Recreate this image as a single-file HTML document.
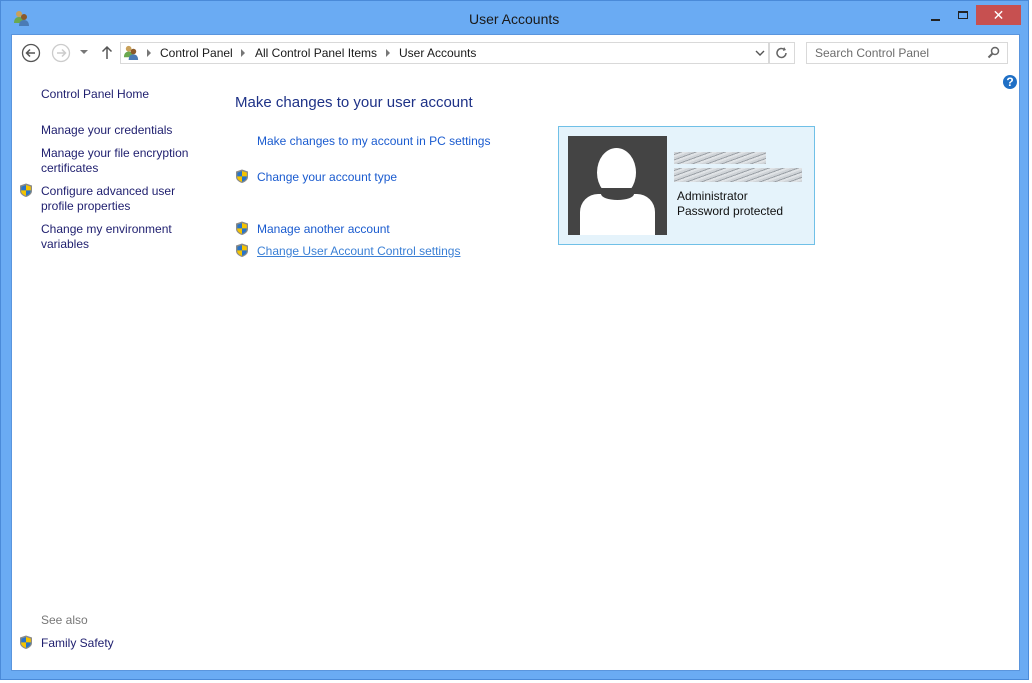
<!DOCTYPE html>
<html><head><meta charset="utf-8"><style>
*{margin:0;padding:0;box-sizing:border-box}
body{width:1032px;height:683px;background:#fff;font-family:"Liberation Sans",sans-serif;font-size:12px;position:relative;overflow:hidden}
.win{position:absolute;left:0;top:0;width:1029px;height:680px;background:#6aabf3;border:1px solid #4a8ad8}
.content{position:absolute;left:11px;top:34px;width:1009px;height:637px;background:#fff;border:1px solid #5a95dd}
.t{position:absolute;white-space:nowrap}
.nav{color:#1e1e6e;font-size:12px;line-height:15px}
.lnk{color:#1a5bcf;font-size:12px}
svg{position:absolute}
.arr{position:absolute;top:49px;width:0;height:0;border-left:4px solid #777;border-top:4px solid transparent;border-bottom:4px solid transparent}
</style></head><body>
<div class="win"></div>
<div class="t" style="left:469px;top:11px;font-size:14px;color:#1a1a1a">User Accounts</div>
<svg style="left:13px;top:9px" width="18" height="18" viewBox="0 0 18 18"><circle cx="6" cy="5" r="3" fill="#c9a15a"/><path d="M1 14c0-4 2-6 5-6s5 2 5 6z" fill="#6aa84f"/><circle cx="11" cy="8" r="3" fill="#8a5a2b"/><path d="M6 17c0-4 2-6 5-6s5 2 5 6z" fill="#4a7bb5"/></svg>
<div style="position:absolute;left:931px;top:19px;width:9px;height:2px;background:#222"></div>
<div style="position:absolute;left:958px;top:11px;width:10px;height:8px;border:1px solid #222;border-top-width:2px"></div>
<div style="position:absolute;left:976px;top:5px;width:45px;height:20px;background:#c75050;color:#fff;font-size:14px;text-align:center;line-height:20px">✕</div>
<div class="content"></div>
<svg style="left:21px;top:43px" width="20" height="20"><circle cx="10" cy="10" r="8.5" fill="none" stroke="#555" stroke-width="1.3"/><path d="M14 10H6M9 6.5L5.5 10 9 13.5" fill="none" stroke="#555" stroke-width="1.5"/></svg>
<svg style="left:51px;top:43px" width="20" height="20"><circle cx="10" cy="10" r="8.5" fill="none" stroke="#ccc" stroke-width="1.3"/><path d="M6 10h8M11 6.5L14.5 10 11 13.5" fill="none" stroke="#ccc" stroke-width="1.5"/></svg>
<svg style="left:80px;top:50px" width="8" height="5"><path d="M0 0h8L4 4z" fill="#777"/></svg>
<svg style="left:101px;top:45px" width="12" height="15"><path d="M6 14V2M1.5 6.5L6 2l4.5 4.5" fill="none" stroke="#555" stroke-width="1.5"/></svg>
<div style="position:absolute;left:120px;top:42px;width:650px;height:22px;border:1px solid #d9d9d9"></div>
<div style="position:absolute;left:768px;top:42px;width:27px;height:22px;border:1px solid #d9d9d9"></div>
<svg style="left:123px;top:44px" width="17" height="17" viewBox="0 0 18 18"><circle cx="6" cy="5" r="3" fill="#c9a15a"/><path d="M1 14c0-4 2-6 5-6s5 2 5 6z" fill="#6aa84f"/><circle cx="11" cy="8" r="3" fill="#8a5a2b"/><path d="M6 17c0-4 2-6 5-6s5 2 5 6z" fill="#4a7bb5"/></svg>
<div class="arr" style="left:147px"></div>
<div class="t" style="left:160px;top:46px;color:#1a1a1a">Control Panel</div>
<div class="arr" style="left:241px"></div>
<div class="t" style="left:255px;top:46px;color:#1a1a1a">All Control Panel Items</div>
<div class="arr" style="left:386px"></div>
<div class="t" style="left:399px;top:46px;color:#1a1a1a">User Accounts</div>
<svg style="left:755px;top:49px" width="10" height="8"><path d="M1 2l4 4 4-4" fill="none" stroke="#555" stroke-width="1.4"/></svg>
<svg style="left:775px;top:46px" width="14" height="14"><path d="M11 7a4.5 4.5 0 1 1-1.5-3.4" fill="none" stroke="#666" stroke-width="1.5"/><path d="M9 1l2 3-3 1z" fill="#666"/></svg>
<div style="position:absolute;left:806px;top:42px;width:202px;height:22px;border:1px solid #d9d9d9"></div>
<div class="t" style="left:815px;top:46px;color:#6d6d6d">Search Control Panel</div>
<svg style="left:987px;top:46px" width="13" height="13"><circle cx="8" cy="5" r="3.5" fill="none" stroke="#666" stroke-width="1.5"/><path d="M5.5 7.5L1.5 11.5" stroke="#666" stroke-width="2"/></svg>
<div style="position:absolute;left:1003px;top:75px;width:14px;height:14px;border-radius:50%;background:#1f6fc5;color:#fff;font-weight:bold;font-size:12px;text-align:center;line-height:14px">?</div>
<div class="t nav" style="left:41px;top:87px">Control Panel Home</div>
<div class="t nav" style="left:41px;top:123px">Manage your credentials</div>
<div class="t nav" style="left:41px;top:146px">Manage your file encryption<br>certificates</div>
<div class="t nav" style="left:41px;top:184px">Configure advanced user<br>profile properties</div>
<div class="t nav" style="left:41px;top:222px">Change my environment<br>variables</div>
<div class="t" style="left:41px;top:613px;color:#777">See also</div>
<div class="t nav" style="left:41px;top:636px">Family Safety</div>
<div class="t" style="left:235px;top:94px;font-size:15px;color:#1e3287">Make changes to your user account</div>
<div class="t lnk" style="left:257px;top:134px">Make changes to my account in PC settings</div>
<div class="t lnk" style="left:257px;top:170px">Change your account type</div>
<div class="t lnk" style="left:257px;top:222px">Manage another account</div>
<div class="t lnk" style="left:257px;top:244px;text-decoration:underline;color:#3a7fd5">Change User Account Control settings</div>
<svg width="0" height="0"><defs><g id="sh"><path d="M7 0.5L13 2.5V8c0 3-3 5-6 6C4 13 1 11 1 8V2.5z" fill="#8a8a8a"/><path d="M7 2L11.8 3.6V8c0 2.3-2.3 4-4.8 4.9C4.5 12 2.2 10.3 2.2 8V3.6z" fill="#f5c400"/><path d="M7 2L2.2 3.6V7.4H7zM7 7.4V12.9C9.5 12 11.8 10.3 11.8 8V7.4z" fill="#2a73c8"/></g></defs></svg>
<svg style="left:235px;top:169px" width="14" height="15"><use href="#sh"/></svg>
<svg style="left:235px;top:221px" width="14" height="15"><use href="#sh"/></svg>
<svg style="left:235px;top:243px" width="14" height="15"><use href="#sh"/></svg>
<svg style="left:19px;top:183px" width="14" height="15"><use href="#sh"/></svg>
<svg style="left:19px;top:635px" width="14" height="15"><use href="#sh"/></svg>
<div style="position:absolute;left:558px;top:126px;width:257px;height:119px;background:#e5f3fb;border:1px solid #70c0e7"></div>
<div style="position:absolute;left:568px;top:136px;width:99px;height:99px;background:#444;overflow:hidden">
<div style="position:absolute;left:29px;top:12px;width:39px;height:49px;border-radius:50%;background:#fff"></div>
<div style="position:absolute;left:12px;top:58px;width:75px;height:60px;border-radius:18px 18px 0 0;background:#fff"></div>
<div style="position:absolute;left:33px;top:52px;width:33px;height:12px;border-radius:0 0 50% 50%;background:#444"></div>
</div>
<div style="position:absolute;left:674px;top:152px;width:92px;height:12px;background:repeating-linear-gradient(160deg,#d0d4d8 0 2px,#9aa0a6 2px 3px,#e0e3e6 3px 5px)"></div>
<div style="position:absolute;left:674px;top:168px;width:128px;height:14px;background:repeating-linear-gradient(160deg,#d0d4d8 0 2px,#9aa0a6 2px 3px,#e0e3e6 3px 5px)"></div>
<div class="t" style="left:677px;top:189px;color:#111;line-height:15px">Administrator<br>Password protected</div>
</body></html>
